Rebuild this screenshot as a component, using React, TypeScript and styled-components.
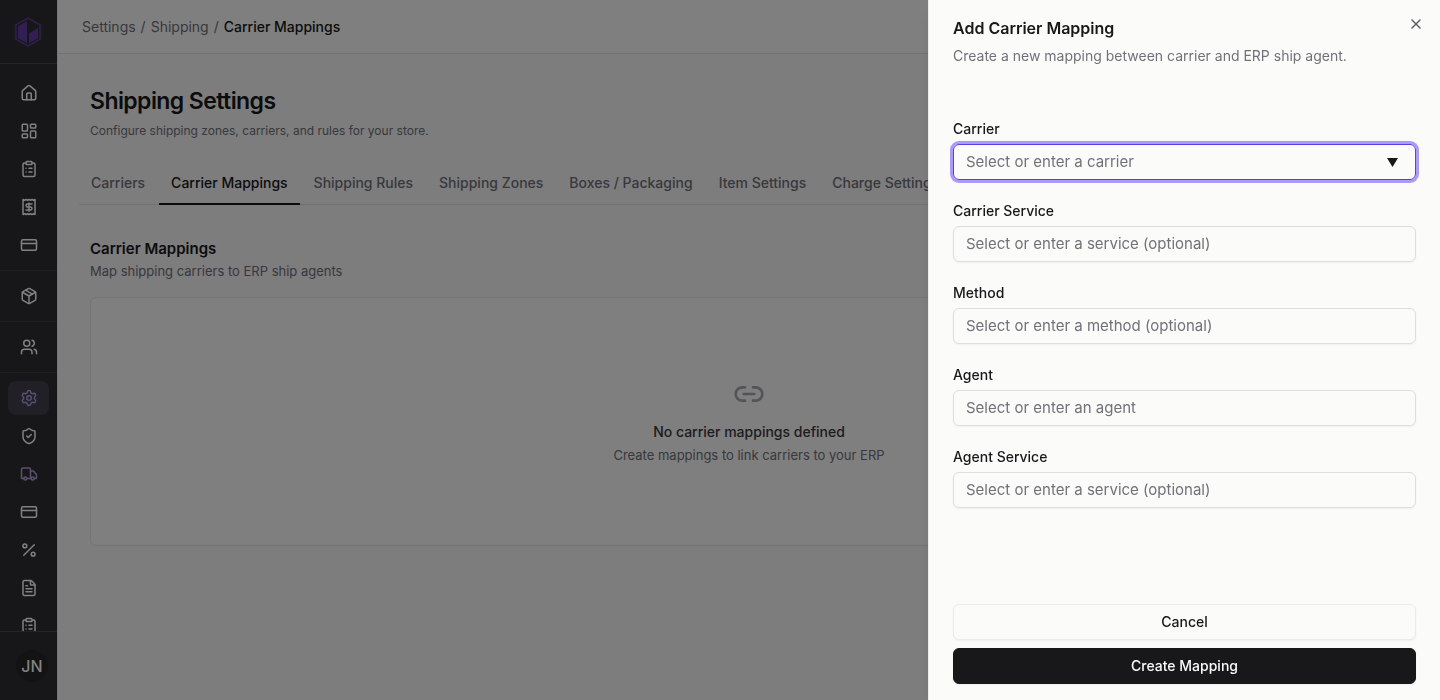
import React from "react";
import styled, { createGlobalStyle, css } from "styled-components";
import {
  ClipboardList,
  CreditCard,
  FileText,
  House,
  LayoutDashboard,
  Link2,
  Package,
  Percent,
  Receipt,
  Settings,
  ShieldCheck,
  Truck,
  Users,
  X,
  type LucideIcon,
} from "lucide-react";

const GlobalStyle = createGlobalStyle`
  *, *::before, *::after { box-sizing: border-box; }
  body {
    margin: 0;
    font-family: Inter, "Liberation Sans", sans-serif;
    font-size: 14px;
    line-height: 20px;
    color: #18181b;
    background: #fafafa;
    -webkit-font-smoothing: antialiased;
  }
  button, input { font: inherit; color: inherit; }
  h1, h2, p, ol { margin: 0; padding: 0; }
`;

const Shell = styled.div`
  display: flex;
  height: 100vh;
  overflow: hidden;
`;

const Sidebar = styled.aside`
  position: relative;
  z-index: 2;
  flex: none;
  display: flex;
  flex-direction: column;
  width: 57px;
  background: #17171a;
`;

const LogoLink = styled.a`
  flex: none;
  display: flex;
  align-items: center;
  height: 64px;
  padding-left: 14px;
  border-bottom: 1px solid #242427;
`;

const Nav = styled.nav`
  flex: 1;
  min-height: 0;
  padding-top: 4px;
  overflow: hidden;
`;

const NavGroup = styled.div`
  display: flex;
  flex-direction: column;
  gap: 4px;
  padding: 8px;

  & + & {
    border-top: 1px solid #1e1e21;
  }
`;

const NavLink = styled.a<{ $active?: boolean; $tinted?: boolean }>`
  display: flex;
  align-items: center;
  justify-content: center;
  height: 34px;
  border-radius: 8px;
  color: ${(p) => (p.$tinted ? "#5b4f70" : "#818183")};
  background: ${(p) => (p.$active ? "#212026" : "transparent")};
`;

const SidebarFooter = styled.div`
  flex: none;
  padding: 18px 0 18px 16px;
  border-top: 1px solid #242427;
`;

const Avatar = styled.button`
  display: flex;
  align-items: center;
  justify-content: center;
  width: 32px;
  height: 32px;
  padding: 0;
  border: 0;
  border-radius: 50%;
  background: #131314;
  color: #828282;
  font-size: 16px;
  font-weight: 500;
`;

const Main = styled.main`
  flex: 1;
  min-width: 0;
  border-left: 1px solid #ebebeb;
  background: #fafafa;
`;

const TopBar = styled.header`
  display: flex;
  align-items: center;
  height: 54px;
  padding: 0 24px;
  border-bottom: 1px solid #e6e6e6;
  background: #fefefe;
`;

const Crumbs = styled.ol`
  display: flex;
  gap: 5px;
  list-style: none;
  color: #71717a;

  a {
    color: inherit;
    text-decoration: none;
  }
`;

const Crumb = styled.li<{ $current?: boolean }>`
  ${(p) =>
    p.$current &&
    css`
      color: #18181b;
      font-weight: 500;
    `}
`;

const PageHead = styled.div`
  padding: 31px 32px 24px;
`;

const PageTitle = styled.h1`
  font-size: 23px;
  line-height: 32px;
  font-weight: 600;
  letter-spacing: -0.025em;
`;

const Hint = styled.p<{ $small?: boolean }>`
  font-size: ${(p) => (p.$small ? 12 : 13)}px;
  line-height: 20px;
  color: #71717a;
`;

const PageHint = styled(Hint)`
  margin-top: 4px;
`;

const Tabs = styled.div`
  display: flex;
  gap: 2px;
  margin: 0 21px;
  border-bottom: 1px solid #e4e4e4;
  white-space: nowrap;
`;

const Tab = styled.button<{ $active?: boolean }>`
  height: 40px;
  margin-bottom: -1px;
  padding: 0 12px 2px;
  border: 0;
  border-bottom: 2px solid ${(p) => (p.$active ? "#18181b" : "transparent")};
  background: none;
  color: ${(p) => (p.$active ? "#18181b" : "#71717a")};
  font-weight: 500;
`;

const Section = styled.section`
  padding: 32px;
`;

const SectionTitle = styled.h2`
  font-size: 15px;
  line-height: 24px;
  font-weight: 600;
`;

const EmptyCard = styled.div`
  display: flex;
  flex-direction: column;
  align-items: center;
  margin-top: 16px;
  padding: 80px 24px;
  border: 1px solid #e8e8e8;
  border-radius: 6px;
  background: #fefefe;

  svg {
    color: #a9a9ad;
  }
`;

const EmptyTitle = styled.p`
  margin: 12px 0 3px;
  color: #3a3a40;
  font-weight: 500;
`;

const Overlay = styled.div`
  position: fixed;
  inset: 0;
  z-index: 1;
  background: rgba(0, 0, 0, 0.5);
`;

const Drawer = styled.div`
  position: fixed;
  inset: 0 0 0 auto;
  z-index: 3;
  display: flex;
  flex-direction: column;
  width: 512px;
  max-width: 100%;
  border-left: 1px solid #ebebe9;
  background: #fbfbf9;
  box-shadow: 0 10px 15px -3px rgba(0, 0, 0, 0.1), 0 4px 6px -4px rgba(0, 0, 0, 0.1);
`;

const DrawerHead = styled.div`
  padding: 16px 24px;
`;

const DrawerTitle = styled.h2`
  margin-bottom: 6px;
  font-size: 16px;
  line-height: 24px;
  font-weight: 600;
`;

const DrawerText = styled.p`
  color: #71717a;
`;

const CloseButton = styled.button`
  position: absolute;
  top: 16px;
  right: 16px;
  display: flex;
  padding: 0;
  border: 0;
  background: none;
  color: #5c5c60;
`;

const Form = styled.form`
  flex: 1;
  min-height: 0;
  display: flex;
  flex-direction: column;
`;

const Fields = styled.div`
  flex: 1;
  min-height: 0;
  display: flex;
  flex-direction: column;
  gap: 24px;
  padding: 40px 24px 16px;
  overflow: auto;
`;

const Field = styled.div`
  display: flex;
  flex-direction: column;
  gap: 8px;
`;

const Label = styled.label`
  line-height: 14px;
  font-weight: 500;
`;

const Control = styled.div<{ $focused?: boolean }>`
  display: flex;
  align-items: center;
  height: 36px;
  padding-right: 17px;
  border: 1px solid ${(p) => (p.$focused ? "#5b3fe0" : "#dededd")};
  border-radius: 6px;
  box-shadow: ${(p) =>
    p.$focused ? "0 0 0 3px #ab9bf7" : "0 1px 2px rgba(0, 0, 0, 0.05)"};
`;

const TextInput = styled.input`
  flex: 1;
  min-width: 0;
  padding: 0 12px;
  border: 0;
  outline: 0;
  background: none;
  font-size: 15px;
  line-height: 24px;

  &::placeholder {
    color: #71717a;
    opacity: 1;
  }
`;

const Actions = styled.div`
  flex: none;
  display: flex;
  flex-direction: column;
  gap: 8px;
  padding: 16px 24px;
`;

const Button = styled.button<{ $primary?: boolean }>`
  height: 36px;
  border: 1px solid ${(p) => (p.$primary ? "#18181b" : "#ebebea")};
  border-radius: 6px;
  background: ${(p) => (p.$primary ? "#18181b" : "#fbfbf9")};
  color: ${(p) => (p.$primary ? "#fafafa" : "#18181b")};
  font-weight: 500;
  box-shadow: 0 1px 2px rgba(0, 0, 0, 0.05);
`;

interface NavItem {
  label: string;
  icon: LucideIcon;
  active?: boolean;
  tinted?: boolean;
}

const navGroups: NavItem[][] = [
  [
    { label: "Home", icon: House },
    { label: "Dashboard", icon: LayoutDashboard },
    { label: "Orders", icon: ClipboardList },
    { label: "Invoices", icon: Receipt },
    { label: "Payments", icon: CreditCard },
  ],
  [{ label: "Products", icon: Package }],
  [{ label: "Customers", icon: Users }],
  [
    { label: "Settings", icon: Settings, active: true, tinted: true },
    { label: "Security", icon: ShieldCheck },
    { label: "Shipping", icon: Truck, tinted: true },
    { label: "Billing", icon: CreditCard },
    { label: "Taxes", icon: Percent },
    { label: "Documents", icon: FileText },
    { label: "Forms", icon: ClipboardList },
  ],
];

const tabs = [
  "Carriers",
  "Carrier Mappings",
  "Shipping Rules",
  "Shipping Zones",
  "Boxes / Packaging",
  "Item Settings",
  "Charge Settings",
];

const fields = [
  { id: "carrier", label: "Carrier", placeholder: "Select or enter a carrier", focused: true },
  { id: "carrier-service", label: "Carrier Service", placeholder: "Select or enter a service (optional)" },
  { id: "method", label: "Method", placeholder: "Select or enter a method (optional)" },
  { id: "agent", label: "Agent", placeholder: "Select or enter an agent" },
  { id: "agent-service", label: "Agent Service", placeholder: "Select or enter a service (optional)" },
];

function Logo() {
  return (
    <svg width="28" height="32" viewBox="0 0 28 32" aria-hidden="true">
      <path
        d="M14 2 L26.2 9 V23 L14 30 L1.8 23 V9 Z"
        fill="none"
        stroke="#2c1f42"
        strokeWidth="2"
        strokeLinejoin="round"
      />
      <path d="M13 5 V27.2 L4 22.2 V10.2 Z" fill="#321e52" />
      <path d="M15 17.2 L24 12 V22.2 L15 27.2 Z" fill="#321e52" />
    </svg>
  );
}

export default function App() {
  return (
    <>
      <GlobalStyle />
      <Shell>
        <Sidebar>
          <LogoLink href="#" aria-label="Home page">
            <Logo />
          </LogoLink>
          <Nav aria-label="Primary">
            {navGroups.map((group, i) => (
              <NavGroup key={i}>
                {group.map(({ label, icon: Icon, active, tinted }) => (
                  <NavLink key={label} href="#" aria-label={label} $active={active} $tinted={tinted}>
                    <Icon size={18} strokeWidth={2} />
                  </NavLink>
                ))}
              </NavGroup>
            ))}
          </Nav>
          <SidebarFooter>
            <Avatar type="button">JN</Avatar>
          </SidebarFooter>
        </Sidebar>

        <Main>
          <TopBar>
            <Crumbs>
              <Crumb>
                <a href="#">Settings</a>
              </Crumb>
              <Crumb>/</Crumb>
              <Crumb>
                <a href="#">Shipping</a>
              </Crumb>
              <Crumb>/</Crumb>
              <Crumb $current>Carrier Mappings</Crumb>
            </Crumbs>
          </TopBar>

          <PageHead>
            <PageTitle>Shipping Settings</PageTitle>
            <PageHint $small>Configure shipping zones, carriers, and rules for your store.</PageHint>
          </PageHead>

          <Tabs role="tablist">
            {tabs.map((tab) => (
              <Tab
                key={tab}
                type="button"
                role="tab"
                aria-selected={tab === "Carrier Mappings"}
                $active={tab === "Carrier Mappings"}
              >
                {tab}
              </Tab>
            ))}
          </Tabs>

          <Section>
            <SectionTitle>Carrier Mappings</SectionTitle>
            <Hint>Map shipping carriers to ERP ship agents</Hint>
            <EmptyCard>
              <Link2 size={32} />
              <EmptyTitle>No carrier mappings defined</EmptyTitle>
              <Hint>Create mappings to link carriers to your ERP</Hint>
            </EmptyCard>
          </Section>
        </Main>
      </Shell>

      <Overlay />

      <Drawer role="dialog" aria-labelledby="drawer-title">
        <DrawerHead>
          <DrawerTitle id="drawer-title">Add Carrier Mapping</DrawerTitle>
          <DrawerText>Create a new mapping between carrier and ERP ship agent.</DrawerText>
        </DrawerHead>
        <Form>
          <Fields>
            {fields.map((f) => (
              <Field key={f.id}>
                <Label htmlFor={f.id}>{f.label}</Label>
                <Control $focused={f.focused}>
                  <TextInput id={f.id} type="text" placeholder={f.placeholder} />
                  {f.focused && (
                    <svg width="11" height="9" viewBox="0 0 11 9" aria-hidden="true">
                      <path d="M0 0 H11 L5.5 9 Z" fill="#18181b" />
                    </svg>
                  )}
                </Control>
              </Field>
            ))}
          </Fields>
          <Actions>
            <Button type="button">Cancel</Button>
            <Button type="submit" $primary>
              Create Mapping
            </Button>
          </Actions>
        </Form>
        <CloseButton type="button" aria-label="Close">
          <X size={16} strokeWidth={2} />
        </CloseButton>
      </Drawer>
    </>
  );
}
